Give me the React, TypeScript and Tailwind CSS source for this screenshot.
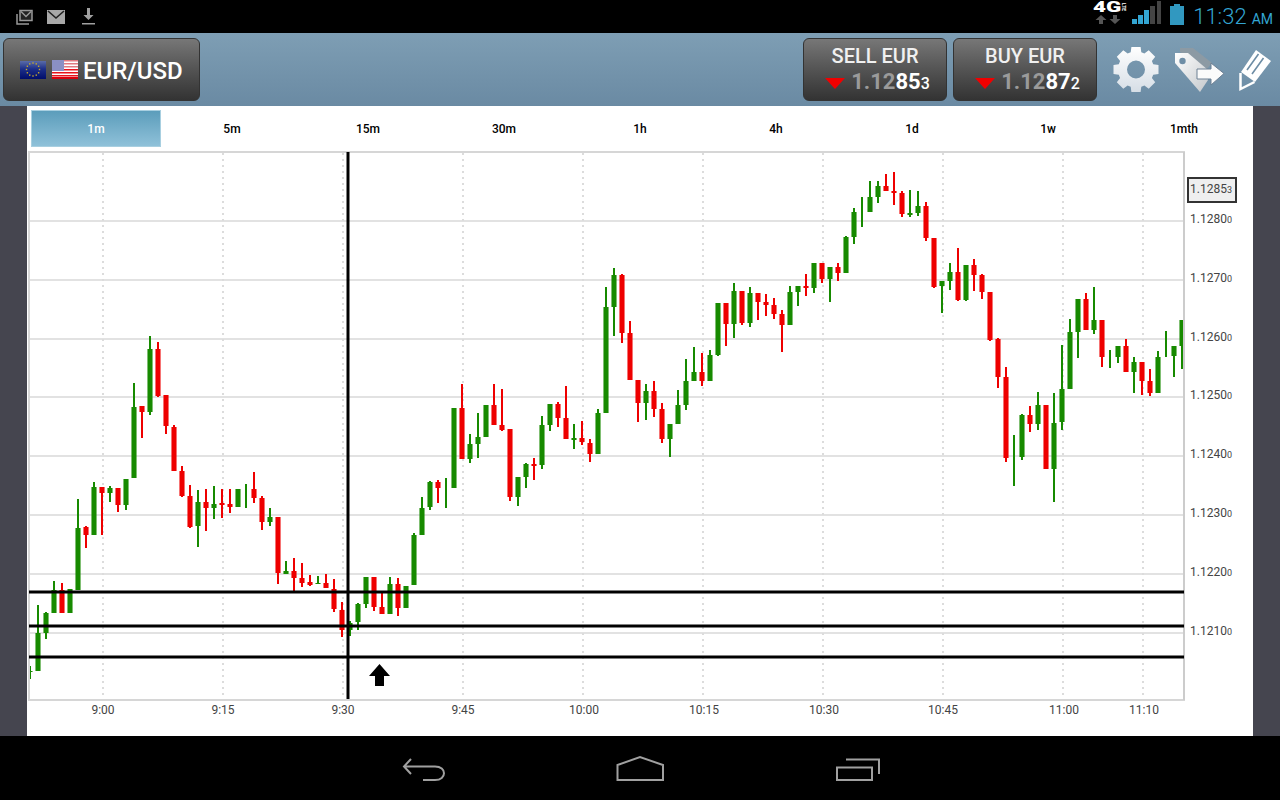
import React from 'react';

type Candle = [string, number, number, number, number];

const g = '#178a00';
const r = '#ee0000';

// color, wick top, body top, body bottom, wick bottom. One candle every 8px from x=30
const candles: Candle[] = [
  [g, 666, 671, 672, 679], [g, 605, 633, 671, 671], [g, 612, 613, 633, 639], [g, 581, 590, 613, 613],
  [r, 583, 590, 613, 613], [g, 589, 589, 613, 613], [g, 499, 528, 590, 590], [r, 526, 527, 535, 548],
  [g, 482, 487, 535, 535], [r, 487, 487, 493, 535], [g, 486, 488, 493, 502], [r, 488, 488, 505, 512],
  [g, 479, 479, 505, 510], [g, 383, 407, 478, 478], [r, 406, 406, 412, 438], [g, 336, 349, 412, 415],
  [r, 342, 349, 396, 397], [r, 395, 395, 426, 434], [r, 425, 427, 471, 471], [r, 466, 471, 496, 497],
  [r, 485, 496, 527, 528], [g, 490, 502, 526, 547], [r, 489, 502, 508, 531], [g, 486, 504, 508, 519],
  [r, 489, 503, 505, 518], [r, 489, 504, 507, 513], [g, 489, 489, 507, 507], [g, 484, 507, 507, 508],
  [r, 472, 489, 498, 503], [r, 496, 498, 522, 530], [g, 508, 517, 522, 526], [r, 517, 517, 573, 584],
  [g, 561, 571, 574, 574], [r, 558, 571, 578, 591], [r, 563, 578, 583, 587], [r, 575, 582, 585, 586],
  [g, 576, 583, 584, 584], [r, 574, 583, 588, 588], [r, 579, 589, 609, 612], [r, 602, 610, 630, 637],
  [g, 621, 623, 630, 636], [g, 603, 604, 622, 630], [g, 577, 577, 604, 608], [r, 577, 577, 607, 611],
  [r, 593, 607, 614, 614], [g, 577, 584, 614, 614], [r, 578, 584, 608, 616], [g, 586, 586, 608, 608],
  [g, 533, 535, 585, 585], [g, 497, 508, 535, 535], [g, 481, 482, 507, 510], [r, 480, 482, 488, 503],
  [g, 478, 493, 493, 508], [g, 408, 408, 488, 488], [r, 384, 408, 459, 459], [g, 434, 444, 459, 463],
  [g, 413, 437, 444, 458], [g, 405, 405, 437, 437], [r, 384, 405, 425, 425], [r, 389, 425, 430, 431],
  [r, 429, 429, 497, 501], [g, 477, 477, 497, 506], [g, 463, 464, 477, 488], [r, 458, 464, 466, 480],
  [g, 416, 425, 465, 469], [g, 404, 404, 425, 431], [r, 402, 404, 418, 427], [r, 386, 418, 439, 439],
  [g, 424, 438, 440, 449], [r, 421, 438, 442, 445], [r, 439, 443, 454, 462], [g, 409, 413, 454, 454],
  [g, 287, 307, 413, 413], [g, 268, 275, 307, 336], [r, 274, 275, 333, 343], [r, 321, 333, 380, 380],
  [r, 380, 380, 403, 422], [g, 384, 391, 403, 420], [r, 381, 391, 409, 417], [r, 403, 409, 439, 443],
  [g, 424, 424, 439, 457], [g, 390, 405, 424, 424], [g, 359, 381, 405, 410], [g, 347, 372, 381, 381],
  [r, 353, 372, 381, 386], [g, 350, 355, 381, 381], [g, 303, 303, 355, 356], [r, 303, 303, 324, 346],
  [g, 283, 291, 324, 338], [r, 291, 291, 323, 325], [g, 287, 293, 323, 327], [r, 293, 293, 302, 320],
  [r, 294, 302, 305, 316], [r, 298, 305, 314, 319], [r, 310, 314, 325, 352], [g, 286, 292, 325, 325],
  [g, 286, 286, 292, 306], [r, 274, 286, 288, 296], [g, 263, 263, 288, 293], [r, 263, 263, 279, 283],
  [g, 267, 267, 279, 302], [r, 263, 267, 273, 281], [g, 236, 237, 273, 273], [g, 208, 212, 237, 244],
  [g, 197, 212, 212, 227], [g, 181, 197, 212, 212], [g, 181, 186, 197, 203], [r, 174, 186, 191, 191],
  [r, 172, 191, 193, 205], [r, 191, 193, 214, 217], [g, 190, 213, 215, 217], [g, 191, 206, 213, 216],
  [r, 202, 206, 238, 241], [r, 238, 238, 287, 288], [g, 281, 281, 286, 313], [g, 263, 272, 281, 290],
  [r, 248, 272, 300, 301], [g, 265, 265, 300, 301], [r, 259, 265, 275, 291], [r, 274, 275, 292, 299],
  [r, 292, 292, 340, 341], [r, 338, 339, 377, 388], [r, 367, 377, 458, 462], [g, 435, 457, 457, 486],
  [g, 414, 415, 457, 460], [r, 406, 415, 424, 432], [g, 392, 405, 424, 430], [r, 405, 405, 469, 469],
  [g, 393, 423, 469, 502], [g, 345, 389, 422, 430], [g, 319, 332, 389, 389], [g, 299, 299, 332, 358],
  [r, 293, 299, 330, 330], [g, 287, 320, 330, 334], [r, 320, 320, 357, 367], [g, 350, 359, 359, 368],
  [g, 346, 346, 357, 363], [r, 339, 346, 372, 372], [g, 357, 362, 372, 393], [r, 362, 362, 381, 395],
  [r, 369, 381, 393, 396], [g, 351, 357, 393, 393], [g, 331, 345, 345, 357], [g, 346, 346, 356, 377],
  [g, 320, 320, 346, 369],
];

const tabs = ['1m', '5m', '15m', '30m', '1h', '4h', '1d', '1w', '1mth'];
const gridY = [221, 280, 339, 397, 456, 515, 574, 633];
const gridX = [103, 223, 343, 463, 583, 703, 823, 943, 1063, 1143];
const prices = [
  { label: '1.1280', y: 223 }, { label: '1.1270', y: 282 }, { label: '1.1260', y: 341 }, { label: '1.1250', y: 399 },
  { label: '1.1240', y: 458 }, { label: '1.1230', y: 517 }, { label: '1.1220', y: 576 }, { label: '1.1210', y: 635 },
];
const times = [
  { label: '9:00', x: 103 }, { label: '9:15', x: 223 }, { label: '9:30', x: 343 }, { label: '9:45', x: 463 },
  { label: '10:00', x: 584 }, { label: '10:15', x: 704 }, { label: '10:30', x: 824 }, { label: '10:45', x: 943 },
  { label: '11:00', x: 1064 }, { label: '11:10', x: 1144 },
];

const gearPath = (cx: number, cy: number, outer: number, inner: number, hole: number) => {
  let d = '';
  const teeth = 8;
  for (let i = 0; i < teeth; i++) {
    const a = (i / teeth) * Math.PI * 2 - Math.PI / 2;
    const pts: [number, number][] = [
      [inner, a - 0.3], [outer, a - 0.2], [outer, a + 0.2], [inner, a + 0.3],
    ];
    pts.forEach(([rad, t], j) => {
      const x = (cx + rad * Math.cos(t)).toFixed(1);
      const y = (cy + rad * Math.sin(t)).toFixed(1);
      d += (i === 0 && j === 0 ? 'M' : 'L') + x + ' ' + y + ' ';
    });
  }
  d += `Z M${cx - hole} ${cy} a${hole} ${hole} 0 1 0 ${hole * 2} 0 a${hole} ${hole} 0 1 0 ${-hole * 2} 0 Z`;
  return d;
};

const StatusLeft = () => (
  <div className="flex items-center pl-4">
    <svg width="17" height="16" viewBox="0 0 17 16" fill="none" stroke="#999" strokeWidth="1.5">
      <path d="M1 5v10h12" />
      <path d="M4 1.500h12v10H4z" fill="#222" />
      <path d="M5 2.500l5 5 5-5" />
    </svg>
    <svg className="ml-[14px]" width="18" height="14" viewBox="0 0 18 14">
      <path d="M0 0h18v14H0z" fill="#a8a8a8" />
      <path d="M1 1l8 7 8-7" fill="none" stroke="#222" strokeWidth="1.6" />
    </svg>
    <svg className="ml-[17px]" width="13" height="17" viewBox="0 0 13 17" fill="#a0a0a0">
      <path d="M5 0h3v7h3.500L6.500 12 1.500 7H5z" />
      <path d="M0 15h13v1.500H0z" />
    </svg>
  </div>
);

const StatusRight = () => (
  <div className="flex items-start pr-[7px] pt-[2px]">
    <div className="flex w-[34px] flex-col items-start">
      <div className="flex h-[13px] items-center text-white font-['Roboto',sans-serif]">
        <span className="origin-left scale-x-[1.6] pr-[10px] text-[14px] leading-[13px] font-black">4G</span>
        <span className="text-[5px] leading-[6px] font-bold [writing-mode:vertical-rl]">LTE</span>
      </div>
      <svg width="26" height="9" viewBox="0 0 26 9" fill="#555" className="ml-[2px] mt-[1px]">
        <path d="M6 0l5.500 5H8v4H4V5H.5z" />
        <path d="M20 9l5.500-5H22V0h-4v4h-3.500z" />
      </svg>
    </div>
    <svg className="ml-[4px]" width="30" height="24" viewBox="0 0 30 24">
      <rect x="1" y="18" width="5" height="5" fill="#33a5d2" />
      <rect x="7" y="14" width="5" height="9" fill="#33a5d2" />
      <rect x="13" y="9" width="5" height="14" fill="#33a5d2" />
      <rect x="19" y="5" width="5" height="18" fill="#444" />
      <rect x="26" y="0" width="4" height="23" fill="#444" />
    </svg>
    <svg className="ml-[9px] mt-[3px]" width="14" height="21" viewBox="0 0 14 21">
      <path d="M4 0h6v2h4v19H0V2h4z" fill="#3198c0" />
    </svg>
    <div className="ml-[9px] mt-[1px] flex items-baseline text-[#33a5d2] font-['Roboto',sans-serif]">
      <span className="text-[22px] leading-[30px] font-light">11:32</span>
      <span className="ml-[5px] text-[14px] leading-[30px]">AM</span>
    </div>
  </div>
);

const EuFlag = () => {
  const stars = Array.from({ length: 12 }, (_, i) => {
    const a = (i / 12) * Math.PI * 2;
    return { x: 13 + 6.5 * Math.cos(a), y: 8.5 + 6.5 * Math.sin(a) };
  });
  return (
    <svg width="26" height="18" viewBox="0 0 26 18">
      <defs>
        <linearGradient id="euBg" x1="0" y1="0" x2="0" y2="1">
          <stop offset="0" stopColor="#5a6ca8" />
          <stop offset="0.45" stopColor="#1c2e88" />
          <stop offset="1" stopColor="#000d6b" />
        </linearGradient>
      </defs>
      <rect width="26" height="18" fill="url(#euBg)" />
      {stars.map((s, i) => (
        <rect key={i} x={s.x - 0.7} y={s.y - 0.7} width="1.4" height="1.4" fill="#c9a92c" />
      ))}
    </svg>
  );
};

const UsFlag = () => (
  <svg width="26" height="19" viewBox="0 0 26 19">
    <rect width="26" height="19" fill="#fff" />
    {[0, 3, 6, 9, 12, 15].map((y) => (
      <rect key={y} y={y} width="26" height="1.5" fill={y < 8 ? '#e07a80' : '#e8141c'} />
    ))}
    <rect y="17" width="26" height="2" fill="#d8000c" />
    <rect width="12" height="11" fill="#8a90c4" />
  </svg>
);

const TradeButton = ({ side, mute, big, small }: { side: string; mute: string; big: string; small: string }) => (
  <button className="flex h-[63px] w-[144px] flex-col items-center rounded-md border border-[#333] bg-gradient-to-b from-[#777777] to-[#333333] font-['Roboto',sans-serif]">
    <span className="mt-[5px] text-[20px] leading-6 font-medium text-[#f0f0f0]">{side}</span>
    <span className="ml-[5px] mt-[1px] flex items-baseline leading-[26px]">
      <svg className="mr-[6px] self-center" width="20" height="11" viewBox="0 0 20 11">
        <path d="M0 0h20L10 11z" fill="#f00000" />
      </svg>
      <span className="text-[22px] font-bold text-[#9a9a9a]">{mute}</span>
      <span className="text-[22px] font-bold text-white">{big}</span>
      <span className="text-[16px] font-medium text-white">{small}</span>
    </span>
  </button>
);

const Chart = () => (
  <svg className="block" width="1226" height="588" viewBox="27 148 1226 588" fontFamily="Roboto, sans-serif">
    <defs>
      <clipPath id="plot">
        <rect x="29" y="152" width="1154" height="548" />
      </clipPath>
    </defs>
    {gridY.map((y) => (
      <line key={y} x1="29" x2="1183" y1={y} y2={y} stroke="#e2e2e2" strokeWidth="2" />
    ))}
    {gridX.map((x) => (
      <line key={x} x1={x} x2={x} y1="153" y2="699" stroke="#dcdcdc" strokeWidth="2" strokeDasharray="2 4" />
    ))}
    <g clipPath="url(#plot)">
      {candles.map(([color, wt, bt, bb, wb], i) => {
        const x = 30 + i * 8;
        return (
          <g key={i}>
            <rect x={x - 1} y={wt} width="2" height={Math.max(wb - wt, 1)} fill={color} />
            {bb > bt && <rect x={x - 3} y={bt} width="6" height={bb - bt} fill={color} opacity="0.55" />}
            {bb > bt && <rect x={x - 2} y={bt} width="4" height={bb - bt} fill={color} />}
          </g>
        );
      })}
    </g>
    <rect x="29" y="152" width="1155" height="548" fill="none" stroke="#d6d6d6" strokeWidth="2" />
    <line x1="1184" x2="1184" y1="152" y2="700" stroke="#cccccc" strokeWidth="2" />
    {[592, 626, 657].map((y) => (
      <line key={y} x1="29" x2="1184" y1={y} y2={y} stroke="#000" strokeWidth="3" />
    ))}
    <line x1="348" x2="348" y1="152" y2="699" stroke="#000" strokeWidth="3" />
    <path d="M379.500 664l10.500 12h-6v10h-9v-10h-6z" fill="#000" />
    {prices.map((p) => (
      <text key={p.label} x="1190" y={p.y} fontSize="12" fill="#444">
        {p.label}
        <tspan fontSize="9">0</tspan>
      </text>
    ))}
    <rect x="1188" y="178" width="48" height="24" fill="#efefef" stroke="#333" strokeWidth="2" />
    <text x="1190" y="193" fontSize="12" fill="#444">
      1.1285<tspan fontSize="9">3</tspan>
    </text>
    {times.map((t) => (
      <text key={t.label} x={t.x} y="714" fontSize="12" fill="#444" textAnchor="middle">
        {t.label}
      </text>
    ))}
  </svg>
);

export default function App() {
  return (
    <div className="flex h-[800px] w-[1280px] flex-col overflow-hidden bg-black">
      <div className="flex h-[33px] items-center justify-between">
        <StatusLeft />
        <StatusRight />
      </div>

      <div className="flex h-[73px] items-center bg-gradient-to-b from-[#7e9eb4] to-[#6a8aa3] pl-[3px] pr-[7px]">
        <button className="flex h-[63px] w-[197px] items-center rounded-md border border-[#333] bg-gradient-to-b from-[#777777] to-[#333333] pl-4">
          <EuFlag />
          <span className="ml-[6px]"><UsFlag /></span>
          <span className="ml-[5px] mt-[3px] text-[24px] font-medium text-white font-['Roboto',sans-serif]">EUR/USD</span>
        </button>

        <div className="ml-auto flex gap-[6px]">
          <TradeButton side="SELL EUR" mute="1.12" big="85" small="3" />
          <TradeButton side="BUY EUR" mute="1.12" big="87" small="2" />
        </div>

        <svg className="ml-[15px]" width="48" height="48" viewBox="1112 46 48 48">
          <defs>
            <linearGradient id="gearFill" x1="0" y1="0" x2="0" y2="1">
              <stop offset="0" stopColor="#ffffff" />
              <stop offset="1" stopColor="#d6dee6" />
            </linearGradient>
          </defs>
          <path d={gearPath(1136, 69.5, 23, 18, 9)} fill="url(#gearFill)" fillRule="evenodd" />
        </svg>

        <svg className="ml-[14px]" width="53" height="48" viewBox="1174 46 53 48">
          <defs>
            <linearGradient id="tagFill" x1="0" y1="0" x2="1" y2="1">
              <stop offset="0" stopColor="#ffffff" />
              <stop offset="1" stopColor="#c4c8cc" />
            </linearGradient>
          </defs>
          <path d="M1180 48h13l19 15-5 6-27-17z" fill="#8c9aa4" />
          <path d="M1175 53h13l20 17v10l-8 12-25-29z" fill="url(#tagFill)" />
          <circle cx="1182.5" cy="61" r="3.2" fill="#6f8ea6" />
          <path d="M1197 69h14v-6l13 10.500-13 11.500v-6h-14z" fill="#fbfbfb" stroke="#6d8094" strokeWidth="1" />
        </svg>

        <svg className="ml-[11px]" width="35" height="44" viewBox="1238 49 35 44">
          <path d="M1256 51l15 11-16 21-14-10z" fill="#ffffff" />
          <path d="M1258.500 55l-11.500 16M1263.500 59l-11.500 16" stroke="#6d8da5" strokeWidth="1.600" fill="none" />
          <path d="M1240.500 74v16l14-7" fill="none" stroke="#ffffff" strokeWidth="2.500" />
        </svg>
      </div>

      <div className="flex h-[630px] bg-[#45454f] px-[27px]">
        <div className="flex w-[1226px] flex-col bg-white">
          <div className="flex h-[42px] items-start px-px pt-[4px] font-['Roboto',sans-serif] text-[12px] font-medium">
            {tabs.map((tab, i) => (
              <div key={tab} className="flex h-[37px] w-[136px] items-center justify-center">
                {i === 0 ? (
                  <div className="flex h-[37px] w-[130px] items-center justify-center border border-[#a8cfe0] bg-gradient-to-b from-[#5b9dbb] to-[#8fc1d9] text-white">
                    {tab}
                  </div>
                ) : (
                  <span className="text-black">{tab}</span>
                )}
              </div>
            ))}
          </div>
          <Chart />
        </div>
      </div>

      <div className="flex flex-1 items-center">
        <svg width="1280" height="64" viewBox="0 736 1280 64" fill="none" stroke="#a0a0a0" strokeWidth="2">
          <path d="M411 759l-7 7.500 7 7.500M404 766.500h31c12 0 12 13.500 0 13.500h-12" />
          <path d="M617.500 780v-15l22.500-8 23 8v15z" />
          <path d="M837 767.500h35V780h-35zM846 759.500h33V774" />
        </svg>
      </div>
    </div>
  );
}
